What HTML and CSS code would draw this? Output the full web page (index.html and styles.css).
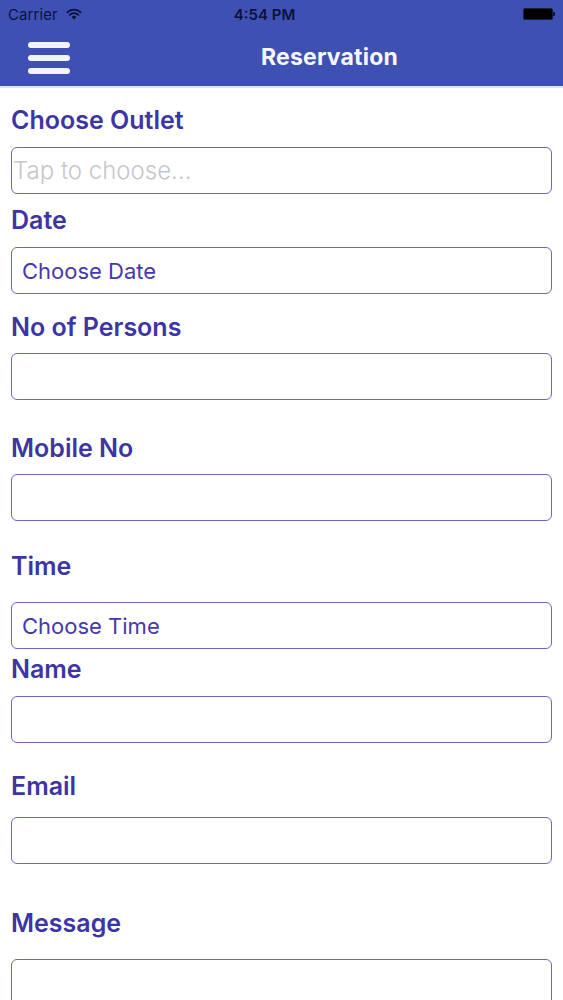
FILE: index.html
```html
<!DOCTYPE html>
<html lang="en">
<head>
<meta charset="utf-8">
<title>Reservation</title>
<link rel="stylesheet" href="styles.css">
</head>
<body>
<header class="appbar">
  <div class="status">
    <div class="status-left">
      <span class="carrier">Carrier</span>
      <svg class="wifi" viewBox="0 0 16 12" width="16" height="12">
        <path d="M8 11.5 L5.6 8.9 A3.4 3.4 0 0 1 10.4 8.9 Z" fill="#0b1238"/>
        <path d="M3.6 6.9 A6.2 6.2 0 0 1 12.4 6.9" fill="none" stroke="#0b1238" stroke-width="1.7" stroke-linecap="round"/>
        <path d="M1.3 4.4 A9.4 9.4 0 0 1 14.7 4.4" fill="none" stroke="#0b1238" stroke-width="1.7" stroke-linecap="round"/>
      </svg>
    </div>
    <span class="clock">4:54 PM</span>
    <div class="status-right">
      <span class="battery"></span><span class="battery-nub"></span>
    </div>
  </div>
  <nav class="navbar">
    <div class="menu" aria-label="Menu">
      <span class="bar"></span><span class="bar"></span><span class="bar"></span>
    </div>
    <h1 class="title">Reservation</h1>
  </nav>
</header>

<main class="form">
  <div class="field f1">
    <label class="label">Choose Outlet</label>
    <div class="box g13"><span class="placeholder">Tap to choose...</span></div>
  </div>
  <div class="field f2">
    <label class="label">Date</label>
    <div class="box g13 padded"><span class="value">Choose Date</span></div>
  </div>
  <div class="field f3">
    <label class="label">No of Persons</label>
    <div class="box g12"></div>
  </div>
  <div class="field f4">
    <label class="label">Mobile No</label>
    <div class="box g12"></div>
  </div>
  <div class="field f5">
    <label class="label">Time</label>
    <div class="box g22 padded"><span class="value">Choose Time</span></div>
  </div>
  <div class="field f6">
    <label class="label">Name</label>
    <div class="box g13"></div>
  </div>
  <div class="field f7">
    <label class="label">Email</label>
    <div class="box g17"></div>
  </div>
  <div class="field f8">
    <label class="label">Message</label>
    <div class="box g22 tall"></div>
  </div>
</main>
</body>
</html>
```

FILE: styles.css
```css
* { box-sizing: border-box; }

html, body {
  margin: 0;
  padding: 0;
  background: #ffffff;
  font-family: Inter, "Liberation Sans", Arial, sans-serif;
  overflow: hidden;
}

body { height: 1000px; }

.appbar {
  background: #3f50b5;
  border-bottom: 2px solid #dfe2f3;
}

.status {
  height: 28px;
  display: flex;
  align-items: center;
  justify-content: space-between;
  padding: 0 8px 0 8px;
  color: #0b1238;
  font-size: 15px;
}

.status-left {
  display: flex;
  align-items: center;
  gap: 8px;
  width: 120px;
}

.carrier {
  font-weight: 400;
  letter-spacing: 0.1px;
}

.wifi { display: block; margin-top: -1px; }

.clock {
  font-weight: 600;
  font-size: 15px;
  margin-left: -34px;
}

.status-right {
  width: 120px;
  display: flex;
  justify-content: flex-end;
  align-items: center;
}

.battery {
  width: 30px;
  height: 12px;
  border: 1px solid #1a1f3a;
  border-radius: 2px;
  background: #000;
  display: inline-block;
}

.battery-nub {
  width: 2px;
  height: 4px;
  background: #0b1238;
  border-radius: 0 1px 1px 0;
  display: inline-block;
}

.navbar {
  height: 58px;
  display: flex;
  align-items: center;
  padding-left: 28px;
}

.menu {
  width: 42px;
  display: flex;
  flex-direction: column;
  gap: 7px;
  margin-top: 1px;
}

.bar {
  display: block;
  height: 6px;
  background: #f3f4fb;
  border-radius: 3px;
}

.title {
  flex: 1;
  margin: 0;
  text-align: center;
  color: #f7f8ff;
  font-size: 23px;
  font-weight: 700;
  padding-left: 26px;
  letter-spacing: 0.2px;
}

.form {
  padding: 0 11px;
}

.field {
  display: flex;
  flex-direction: column;
}

.f1 { margin-top: 18px; }
.f2 { margin-top: 12px; }
.f3 { margin-top: 19px; }
.f4 { margin-top: 34px; }
.f5 { margin-top: 31px; }
.f6 { margin-top: 6px; }
.f7 { margin-top: 29px; }
.f8 { margin-top: 45px; }

.label {
  font-size: 25px;
  line-height: 28px;
  font-weight: 600;
  color: #3d34a6;
}

.box {
  height: 47px;
  border: 1.5px solid #6c67c2;
  border-radius: 6px;
  background: #fff;
  display: flex;
  align-items: center;
  padding: 0 1px;
}

.box.padded { padding-left: 10px; }
.box.tall { height: 80px; }

.g12 { margin-top: 12px; }
.g13 { margin-top: 13px; }
.g17 { margin-top: 17px; }
.g22 { margin-top: 22px; }

.placeholder {
  color: #c6c6cc;
  font-size: 24px;
  font-weight: 300;
}

.value {
  color: #4439ad;
  font-size: 22px;
  font-weight: 400;
}
```
